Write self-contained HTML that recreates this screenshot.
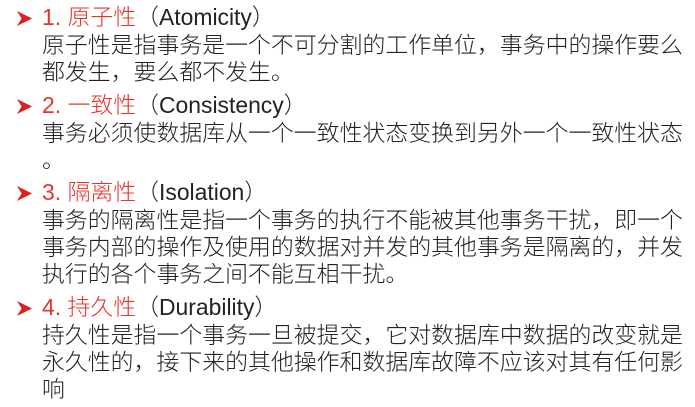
<!DOCTYPE html>
<html><head><meta charset="utf-8"><style>
body{margin:0;width:695px;height:407px;background:#fff;overflow:hidden;position:relative;font-family:"Liberation Sans","Noto Sans CJK SC",sans-serif;}
.l{position:absolute;left:42px;font-size:22.9px;line-height:27px;height:27px;white-space:nowrap;color:#222;font-weight:300;}
.r{color:#e8322c;}
.a{position:absolute;left:16px;width:17px;height:17px;}
</style></head><body>
<svg class="a" style="top:10px" viewBox="0 0 18 18"><path d="M1 1 L17 9 L1 17 L6 9 Z" fill="#e02020"/></svg>
<div class="l" style="top:4px"><span class="r">1. 原子性</span>（Atomicity）</div>
<div class="l" style="top:32px">原子性是指事务是一个不可分割的工作单位，事务中的操作要么</div>
<div class="l" style="top:59px">都发生，要么都不发生。</div>

<svg class="a" style="top:98px" viewBox="0 0 18 18"><path d="M1 1 L17 9 L1 17 L6 9 Z" fill="#e02020"/></svg>
<div class="l" style="top:92px"><span class="r">2. 一致性</span>（Consistency）</div>
<div class="l" style="top:120px">事务必须使数据库从一个一致性状态变换到另外一个一致性状态</div>
<div class="l" style="top:147px">。</div>

<svg class="a" style="top:185px" viewBox="0 0 18 18"><path d="M1 1 L17 9 L1 17 L6 9 Z" fill="#e02020"/></svg>
<div class="l" style="top:179px"><span class="r">3. 隔离性</span>（Isolation）</div>
<div class="l" style="top:207px">事务的隔离性是指一个事务的执行不能被其他事务干扰，即一个</div>
<div class="l" style="top:234px">事务内部的操作及使用的数据对并发的其他事务是隔离的，并发</div>
<div class="l" style="top:261px">执行的各个事务之间不能互相干扰。</div>

<svg class="a" style="top:300px" viewBox="0 0 18 18"><path d="M1 1 L17 9 L1 17 L6 9 Z" fill="#e02020"/></svg>
<div class="l" style="top:294px"><span class="r">4. 持久性</span>（Durability）</div>
<div class="l" style="top:322px">持久性是指一个事务一旦被提交，它对数据库中数据的改变就是</div>
<div class="l" style="top:349px">永久性的，接下来的其他操作和数据库故障不应该对其有任何影</div>
<div class="l" style="top:376px">响</div>
</body></html>
